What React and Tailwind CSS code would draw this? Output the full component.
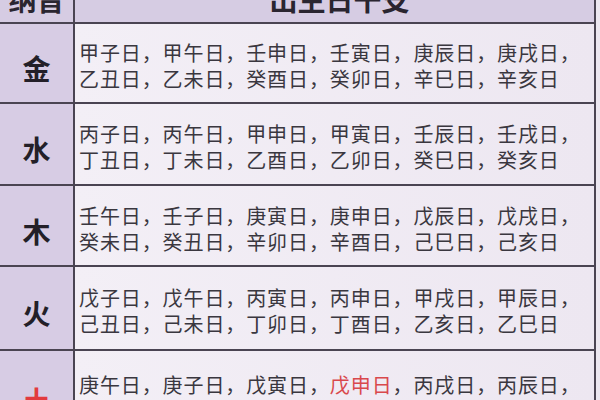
import React from 'react';

const rows = [
  {
    label: '金',
    h: 'h-[80px]',
    lines: [
      ['甲子日', '甲午日', '壬申日', '壬寅日', '庚辰日', '庚戌日'],
      ['乙丑日', '乙未日', '癸酉日', '癸卯日', '辛巳日', '辛亥日'],
    ],
  },
  {
    label: '水',
    h: 'h-[82px]',
    lines: [
      ['丙子日', '丙午日', '甲申日', '甲寅日', '壬辰日', '壬戌日'],
      ['丁丑日', '丁未日', '乙酉日', '乙卯日', '癸巳日', '癸亥日'],
    ],
  },
  {
    label: '木',
    h: 'h-[81px]',
    lines: [
      ['壬午日', '壬子日', '庚寅日', '庚申日', '戊辰日', '戊戌日'],
      ['癸未日', '癸丑日', '辛卯日', '辛酉日', '己巳日', '己亥日'],
    ],
  },
  {
    label: '火',
    h: 'h-[84px]',
    lines: [
      ['戊子日', '戊午日', '丙寅日', '丙申日', '甲戌日', '甲辰日'],
      ['己丑日', '己未日', '丁卯日', '丁酉日', '乙亥日', '乙巳日'],
    ],
  },
  {
    label: '土',
    red: true,
    h: 'h-[90px]',
    lines: [
      ['庚午日', '庚子日', '戊寅日', '戊申日', '丙戌日', '丙辰日'],
      ['辛未日', '辛丑日', '己卯日', '己酉日', '丁亥日', '丁巳日'],
    ],
  },
];

function Line({ items, isFirst }) {
  return (
    <div className="whitespace-nowrap">
      {items.map((d, i) => (
        <span key={i}>
          <span className={d === '戊申日' ? 'text-[#d9484c]' : ''}>{d}</span>
          {(isFirst || i < items.length - 1) && '，'}
        </span>
      ))}
    </div>
  );
}

export default function App() {
  return (
    <div
      className="w-[600px] h-[400px] overflow-hidden bg-[#ece7f0]"
      style={{ fontFamily: '"Noto Sans CJK SC", "Noto Sans", sans-serif' }}
    >
      <div className="w-[596px] border-r-2 border-[#4a4452]">
        <div className="flex h-[48px] -mt-[24px] bg-[#d6cce3] border-b-2 border-[#4a4452] text-[28px] font-bold text-[#2a2530]">
          <div className="w-[75px] shrink-0 border-r-2 border-[#4a4452] flex items-center justify-center">纳音</div>
          <div className="flex-1 flex items-center justify-center pl-[10px]">出生日干支</div>
        </div>
        {rows.map((r) => (
          <div key={r.label} className={`flex ${r.h} border-b-2 border-[#4a4452]`}>
            <div
              className={`w-[75px] shrink-0 bg-[#d7cce4] border-r-2 border-[#4a4452] flex items-center justify-center pt-[10px] text-[28px] font-semibold ${
                r.red ? 'text-[#e23a3e]' : 'text-[#231f28]'
              }`}
            >
              {r.label}
            </div>
            <div className="flex-1 bg-gradient-to-r from-[#f3eff6] to-[#ede7f1] flex flex-col justify-center pl-[4px] pt-[6px] text-[20px] leading-[26px] tracking-[0.9px] text-[#3a373f]">
              <Line items={r.lines[0]} isFirst />
              <Line items={r.lines[1]} />
            </div>
          </div>
        ))}
      </div>
    </div>
  );
}
